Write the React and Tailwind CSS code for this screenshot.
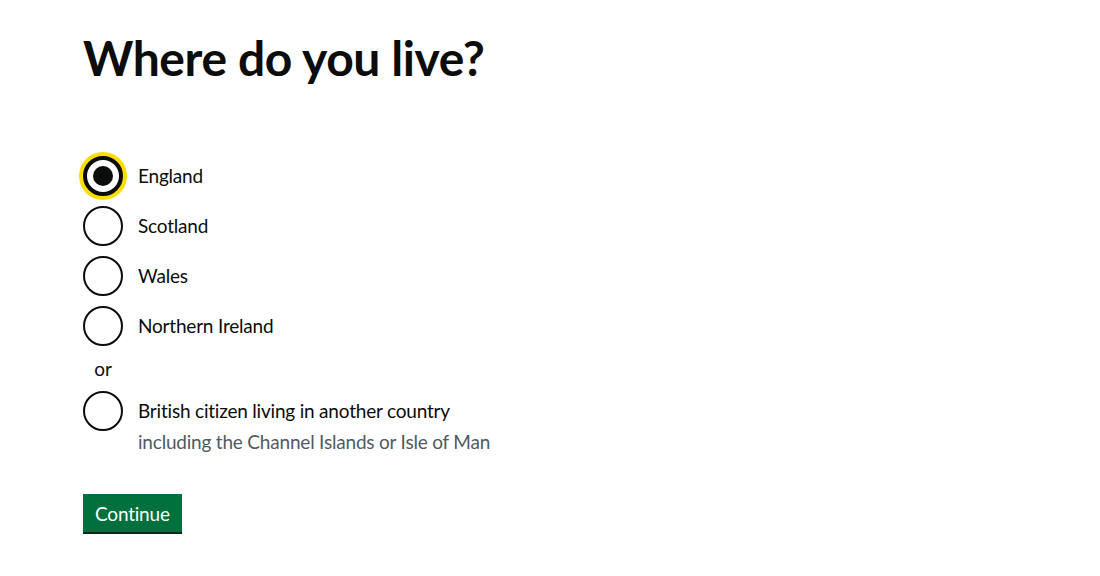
import React, { useState } from 'react';

const options = [
  { value: 'england', label: 'England' },
  { value: 'scotland', label: 'Scotland' },
  { value: 'wales', label: 'Wales' },
  { value: 'northern-ireland', label: 'Northern Ireland' },
];

function Radio({ checked, focused, label, hint, onSelect }) {
  return (
    <label className="flex items-start cursor-pointer" onClick={onSelect}>
      <span
        className={`relative flex h-10 w-10 shrink-0 items-center justify-center rounded-full bg-white ${
          focused ? 'border-4 border-[#0b0c0c] shadow-[0_0_0_4px_#ffdd00]' : 'border-2 border-[#0b0c0c]'
        }`}
      >
        {checked && <span className="h-5 w-5 rounded-full bg-[#0b0c0c]" />}
      </span>
      <span className="flex flex-col">
        <span className="px-[15px] pt-[7px] pb-[8px] text-[19px] leading-[25px] text-[#0b0c0c]">{label}</span>
        {hint && (
          <span className="-mt-[2px] px-[15px] text-[19px] leading-[25px] text-[#505a5f]">{hint}</span>
        )}
      </span>
    </label>
  );
}

export default function App() {
  const [selected, setSelected] = useState('england');

  return (
    <div className="min-h-[576px] bg-white pl-[83px] pt-[33px] font-['Lato',sans-serif] tracking-[-0.2px] text-[#0b0c0c]">
      <h1 className="text-[48px] font-bold leading-[50px] tracking-[-0.4px]">Where do you live?</h1>

      <div className="mt-[73px] flex flex-col gap-[10px]">
        {options.map((opt) => (
          <Radio
            key={opt.value}
            label={opt.label}
            checked={selected === opt.value}
            focused={selected === opt.value && opt.value === 'england'}
            onSelect={() => setSelected(opt.value)}
          />
        ))}
        <div className="w-10 text-center text-[19px] leading-[25px]">or</div>
        <Radio
          label="British citizen living in another country"
          hint="including the Channel Islands or Isle of Man"
          checked={selected === 'abroad'}
          onSelect={() => setSelected('abroad')}
        />
      </div>

      <button
        type="button"
        className="mt-[40px] h-[38px] bg-[#00703c] px-[12px] text-[19px] leading-none text-white shadow-[0_2px_0_#002d18]"
      >
        Continue
      </button>
    </div>
  );
}
